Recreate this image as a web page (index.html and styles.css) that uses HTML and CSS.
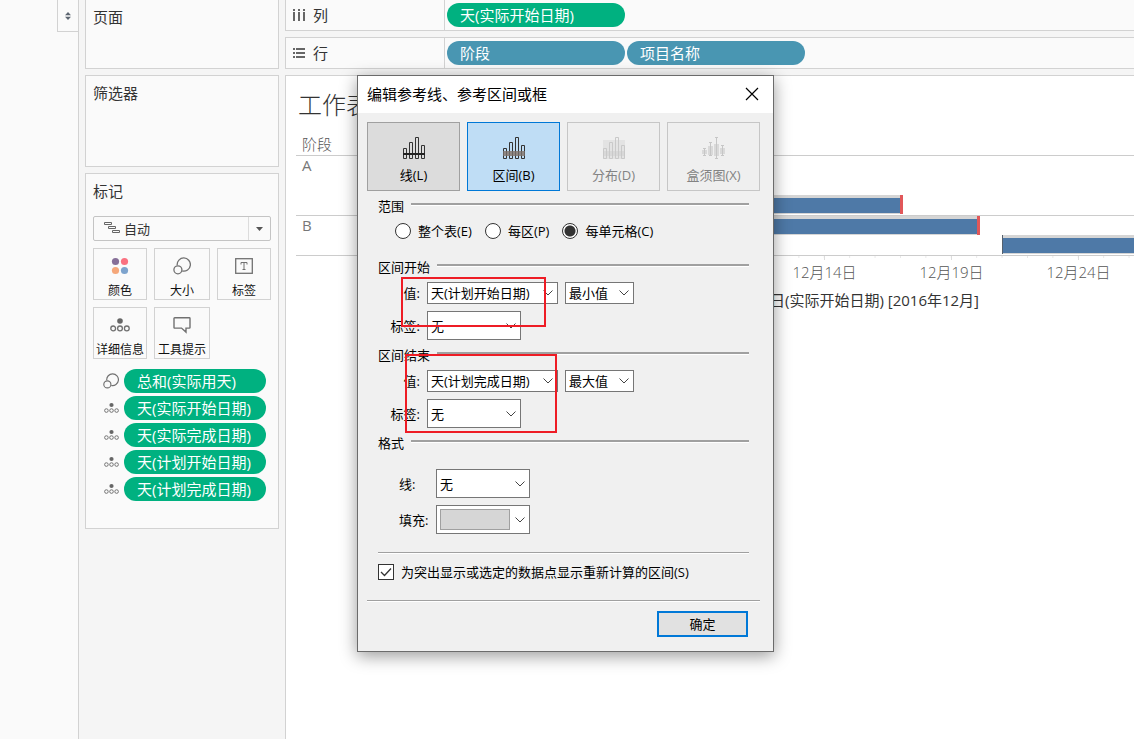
FILE: index.html
```html
<!DOCTYPE html>
<html lang="zh-CN">
<head>
<meta charset="utf-8">
<meta name="viewport" content="width=device-width, initial-scale=1">
<title>工作表</title>
<link rel="stylesheet" href="styles.css">
</head>
<body>
<svg class="defs" width="0" height="0" aria-hidden="true">
  <symbol id="i-size" viewBox="0 0 18 18"><g fill="none" stroke="#717171" stroke-width="1.3"><path d="M4.2 8.2A6.6 6.6 0 1 1 9.3 14"/><circle cx="4.9" cy="12.8" r="4"/></g></symbol>
  <symbol id="i-detail" viewBox="0 0 20 14"><circle cx="10" cy="3" r="2.8" fill="#666"/><g fill="none" stroke="#717171" stroke-width="1.3"><circle cx="3.2" cy="10.4" r="2.4"/><circle cx="10" cy="10.4" r="2.4"/><circle cx="16.8" cy="10.4" r="2.4"/></g></symbol>
  <symbol id="i-bars" viewBox="0 0 22 22"><g fill="none" stroke="currentColor"><path d="M.5 11.5h3v10h-3zM6.5 5.5h3v16h-3zM12.5.5h3v21h-3zM18.5 8.5h3v13h-3z"/></g></symbol>
</svg>

<div class="workspace">
  <aside class="data-pane">
    <button class="pane-toggle" aria-label="展开"><svg width="6" height="8" viewBox="0 0 6 8"><path d="M3 0 6 3.2H0zM0 4.8h6L3 8z" fill="#5c6570"/></svg></button>
  </aside>

  <div class="cards">
    <section class="card card-pages"><h2>页面</h2></section>
    <section class="card card-filters"><h2>筛选器</h2></section>
    <section class="card card-marks">
      <h2>标记</h2>
      <div class="mark-type">
        <svg width="16" height="16" viewBox="0 0 16 16" fill="none" stroke="#666"><path d="M.5 1.5h7v2h-7zM4.5 5.5h7v2h-7zM8.5 9.5h7v2h-7z" /></svg>
        <select aria-label="标记类型"><option>自动</option></select>
      </div>
      <div class="mark-buttons">
        <button><svg width="18" height="18" viewBox="0 0 18 18"><circle cx="4.5" cy="4.5" r="3.6" fill="#866f98"/><circle cx="13.5" cy="4.5" r="3.6" fill="#fa7180"/><circle cx="4.5" cy="13.5" r="3.6" fill="#f5a77a"/><circle cx="13.5" cy="13.5" r="3.6" fill="#7da3cd"/></svg><span>颜色</span></button>
        <button><svg width="18" height="18"><use href="#i-size"/></svg><span>大小</span></button>
        <button><svg width="18" height="18" viewBox="0 0 18 18" fill="none" stroke="#717171"><rect x=".7" y="1.7" width="16.6" height="14.6" stroke-width="1.3"/><path d="M6 7.5v-2h6v2M9 5.5v7M7.5 12.5h3"/></svg><span>标签</span></button>
        <button><svg width="20" height="14"><use href="#i-detail"/></svg><span>详细信息</span></button>
        <button><svg width="18" height="18" viewBox="0 0 18 18" fill="none" stroke="#717171" stroke-width="1.4"><path d="M1.7 1.7h14.6q.7 0 .7.7v9q0 .7-.7.7H13v4L8.5 12.1H1.7Q1 12.1 1 11.4v-9q0-.7.7-.7z"/></svg><span>工具提示</span></button>
      </div>
      <ul class="mark-pills">
        <li><svg width="16" height="16"><use href="#i-size"/></svg><span class="pill green">总和(实际用天)</span></li>
        <li><svg width="15" height="12"><use href="#i-detail"/></svg><span class="pill green">天(实际开始日期)</span></li>
        <li><svg width="15" height="12"><use href="#i-detail"/></svg><span class="pill green">天(实际完成日期)</span></li>
        <li><svg width="15" height="12"><use href="#i-detail"/></svg><span class="pill green">天(计划开始日期)</span></li>
        <li><svg width="15" height="12"><use href="#i-detail"/></svg><span class="pill green">天(计划完成日期)</span></li>
      </ul>
    </section>
  </div>

  <main class="sheet">
    <div class="shelf shelf-columns">
      <div class="shelf-name"><svg width="12" height="12" viewBox="0 0 12 12" fill="#666"><path d="M0 0h2v2H0zM5 0h2v2H5zM10 0h2v2h-2zM0 3h2v9H0zM5 3h2v9H5zM10 3h2v9h-2z"/></svg>列</div>
      <div class="shelf-pills"><span class="pill green">天(实际开始日期)</span></div>
    </div>
    <div class="shelf">
      <div class="shelf-name"><svg width="12" height="12" viewBox="0 0 12 12" fill="#666"><path d="M0 1h2v2H0zM0 5h2v2H0zM0 9h2v2H0zM3 1h9v2H3zM3 5h9v2H3zM3 9h9v2H3z"/></svg>行</div>
      <div class="shelf-pills"><span class="pill blue">阶段</span><span class="pill blue">项目名称</span></div>
    </div>
    <div class="view">
      <h1>工作表</h1>
      <div class="field-name">阶段</div>
      <div class="phase">
        <div class="phase-name">A</div>
        <div class="lanes">
          <div class="lane"></div>
          <div class="lane"></div>
          <div class="lane"><div class="bar late" style="width:458px"></div></div>
        </div>
      </div>
      <div class="phase">
        <div class="phase-name">B</div>
        <div class="lanes">
          <div class="lane"><div class="bar late" style="width:535px"></div></div>
          <div class="lane"><div class="bar start" style="margin-left:557px;width:180px"></div></div>
        </div>
      </div>
      <div class="axis"><span>12月4日</span><span>12月9日</span><span>12月14日</span><span>12月19日</span><span>12月24日</span></div>
      <div class="axis-title">日(实际开始日期) [2016年12月]</div>
    </div>
  </main>
</div>

<div class="dialog" role="dialog" aria-labelledby="dlg-title">
  <header class="dialog-head">
    <h2 id="dlg-title">编辑参考线、参考区间或框</h2>
    <button class="close" aria-label="关闭"><svg width="14" height="14" viewBox="0 0 14 14"><path d="M1 1l12 12M13 1 1 13" stroke="#000" stroke-width="1.2"/></svg></button>
  </header>
  <form class="dialog-body">
    <div class="kinds">
      <button type="button" class="kind"><svg width="22" height="22"><use href="#i-bars"/><path d="M0 17h22" stroke="#222" stroke-width="2"/></svg>线(L)</button>
      <button type="button" class="kind active"><svg width="22" height="22"><path d="M0 14h22v5H0z" fill="#8f8783"/><use href="#i-bars"/><path d="M0 14h22v5H0z" fill="#8f8783" opacity=".6"/></svg>区间(B)</button>
      <button type="button" class="kind" disabled><svg width="22" height="22"><path d="M0 3h22v11H0z" fill="#e3e3e3"/><path d="M0 14h22v5H0z" fill="#d8d8d8"/><path d="M0 19h22v3H0z" fill="#e3e3e3"/><use href="#i-bars"/></svg>分布(D)</button>
      <button type="button" class="kind" disabled><svg width="24" height="22" viewBox="0 0 24 22"><path d="M0 13h5v4H0zM6 9h5v9H6zM12 7h5v12h-5zM18 11h5v6h-5z" fill="#d9d9d9"/><path d="M2.500 11v8M8.500 5.500v13M14.500.5v21M20.500 8.500v10M1 11.500h3M7 5.500h3M13 .5h3M19 8.500h3M1 18.500h3M7 18.500h3M13 21.500h3M19 18.500h3" fill="none" stroke="#c6c6c6"/></svg>盒须图(X)</button>
    </div>

    <div class="section">
      <div class="legend">范围</div>
      <div class="scope">
        <label><input type="radio" name="scope">整个表(E)</label>
        <label><input type="radio" name="scope">每区(P)</label>
        <label><input type="radio" name="scope" checked>每单元格(C)</label>
      </div>
    </div>

    <div class="section">
      <div class="legend">区间开始</div>
      <div class="fields">
        <label for="v1">值:</label>
        <div class="pair"><select id="v1" class="combo wide"><option>天(计划开始日期)</option></select><select class="combo agg" aria-label="聚合"><option>最小值</option></select></div>
        <label for="l1">标签:</label>
        <select id="l1" class="combo tall"><option>无</option></select>
      </div>
    </div>

    <div class="section">
      <div class="legend">区间结束</div>
      <div class="fields">
        <label for="v2">值:</label>
        <div class="pair"><select id="v2" class="combo wide"><option>天(计划完成日期)</option></select><select class="combo agg" aria-label="聚合"><option>最大值</option></select></div>
        <label for="l2">标签:</label>
        <select id="l2" class="combo tall"><option>无</option></select>
      </div>
    </div>

    <div class="section">
      <div class="legend">格式</div>
      <div class="fields format">
        <label for="line">线:</label>
        <select id="line" class="combo tall"><option>无</option></select>
        <label for="fill">填充:</label>
        <button type="button" id="fill" class="combo tall fill"><span class="swatch"></span></button>
      </div>
    </div>

    <label class="recalc"><input type="checkbox" checked>为突出显示或选定的数据点显示重新计算的区间(S)</label>
    <footer class="dialog-foot"><button type="button" class="ok">确定</button></footer>
  </form>
  <div class="mark-box first"></div>
  <div class="mark-box second"></div>
</div>
</body>
</html>
```
FILE: styles.css
```css
* { box-sizing: border-box; }
body {
  margin: 0;
  height: 100vh;
  overflow: hidden;
  background: #f5f5f5;
  color: #333;
  font: 15px/20px "Open Sans", "Noto Sans CJK SC", sans-serif;
}
h1, h2, ul { margin: 0; padding: 0; font-weight: 400; }
h2 { font-size: 15px; }
button, select, input { font: inherit; color: inherit; margin: 0; }
button { padding: 0; background: none; border: 0; }
svg { display: block; flex: none; }
.defs { position: absolute; }

.workspace { display: flex; height: 100%; }
.data-pane {
  flex: none;
  width: 79px;
  background: #fafafa;
  border-right: 1px solid #d2d2d2;
  display: flex;
  justify-content: flex-end;
  align-items: flex-start;
}
.pane-toggle {
  width: 21px;
  height: 32px;
  border: solid #d2d2d2;
  border-width: 0 0 1px 1px;
  display: flex;
  justify-content: center;
  align-items: center;
}

.cards {
  flex: none;
  width: 206px;
  padding: 0 6px;
  display: flex;
  flex-direction: column;
  gap: 6px;
}
.card { background: #fafafa; border: 1px solid #d2d2d2; padding: 7px; }
.card-pages { height: 69px; border-top: 0; }
.card-filters { height: 92px; }
.card-marks { min-height: 356px; }

.mark-type {
  display: flex;
  align-items: center;
  height: 25px;
  margin-top: 15px;
  padding-left: 10px;
  border: 1px solid #c4c4c4;
  border-radius: 2px;
}
.mark-type select {
  flex: 1;
  align-self: stretch;
  appearance: none;
  border: 0;
  padding: 0 4px;
  font-size: 13px;
  background: linear-gradient(#dcdcdc, #dcdcdc) right 21px top / 1px 100% no-repeat,
    url("data:image/svg+xml,%3Csvg xmlns='http://www.w3.org/2000/svg' width='7' height='4'%3E%3Cpath d='M0 0h7L3.500 4z' fill='%23555'/%3E%3C/svg%3E") right 7px center no-repeat;
}
.mark-buttons {
  display: grid;
  grid-template-columns: 54fr 56fr 54fr;
  gap: 7px;
  margin-top: 7px;
}
.mark-buttons button {
  height: 52px;
  border: 1px solid #d2d2d2;
  display: grid;
  grid-template-rows: 34px 16px;
  place-items: center;
  font-size: 12px;
  line-height: 16px;
  color: #111;
  white-space: nowrap;
}
.mark-pills {
  list-style: none;
  display: flex;
  flex-direction: column;
  gap: 3px;
  margin-top: 10px;
  padding: 0 5px 0 10px;
}
.mark-pills li { display: grid; grid-template-columns: 16px 1fr; gap: 5px; align-items: center; justify-items: center; }
.mark-pills .pill { width: 100%; }

.pill {
  height: 24px;
  padding: 0 13px;
  border-radius: 12px;
  color: #fff;
  line-height: 24px;
  white-space: nowrap;
}
.green { background: #00b180; }
.blue { background: #4996b2; }

.sheet { flex: 1; min-width: 0; display: flex; flex-direction: column; gap: 6px; }
.shelf {
  flex: none;
  height: 32px;
  display: flex;
  background: #fafafa;
  border: solid #d2d2d2;
  border-width: 1px 0 1px 1px;
}
.shelf-columns { height: 31px; border-top: 0; }
.shelf-name {
  width: 159px;
  padding-left: 7px;
  display: flex;
  align-items: center;
  gap: 8px;
  border-right: 1px solid #d2d2d2;
}
.shelf-pills { display: flex; align-items: center; gap: 2px; padding-left: 2px; }
.shelf-pills .pill { width: 178px; }

.view {
  flex: 1;
  overflow: hidden;
  background: #fff;
  border: solid #d2d2d2;
  border-width: 1px 0 0 1px;
  padding: 12px 0 0 10px;
}
.view h1 {
  font-size: 24px;
  line-height: 34px;
  font-weight: 300;
  padding-left: 2px;
}
.field-name { padding: 12px 0 1px 6px; color: #555; font-weight: 300; }
.phase { display: flex; height: 60px; border-top: 1px solid #ccc; }
.phase + .phase { height: 40px; }
.phase-name { width: 149px; padding-left: 6px; color: #777; line-height: 18px; }
.lanes {
  flex: 1;
  min-width: 0;
  overflow: hidden;
  display: flex;
  flex-direction: column;
  justify-content: flex-end;
}
.lane { flex: none; height: 20px; }
.lane:first-child { height: 19px; }
.bar {
  height: 19px;
  border: solid #d5d5d5;
  border-width: 3px 0 1px;
  background: #4e79a7;
  display: flex;
  justify-content: flex-end;
}
.bar.late::after { content: ""; width: 3px; height: 19px; margin-top: -3px; background: #e15759; }
.bar.start { justify-content: flex-start; }
.bar.start::before { content: ""; width: 1px; height: 19px; margin-top: -3px; background: #55616e; }
.axis {
  border-top: 1px solid #ccc;
  display: flex;
  padding-left: 211px;
  color: #555;
  font-weight: 300;
}
.axis span {
  flex: none;
  width: 127px;
  padding-top: 6px;
  text-align: center;
  background: linear-gradient(#ddd, #ddd) center top / 1px 4px no-repeat,
    linear-gradient(to right, #e8e8e8 1px, transparent 1px) 12px 0 / 20% 2px repeat-x;
}
.axis-title { padding: 8px 0 0 474px; white-space: nowrap; }

.dialog {
  position: absolute;
  left: 357px;
  top: 75px;
  width: 417px;
  background: #f0f0f0;
  border: 1px solid #6b6b6b;
  box-shadow: 0 4px 16px rgba(0, 0, 0, .4);
  color: #000;
  font-size: 13px;
}
.dialog-head {
  height: 37px;
  padding: 0 14px 2px 9px;
  background: #fff;
  display: flex;
  align-items: center;
  justify-content: space-between;
}
.dialog-body { padding: 9px 13px 14px 9px; }
.kinds { display: grid; grid-template-columns: repeat(4, 1fr); gap: 7px; }
.kind {
  height: 69px;
  padding-top: 8px;
  display: flex;
  flex-direction: column;
  align-items: center;
  justify-content: center;
  gap: 6px;
  background: #dcdcdc;
  border: 1px solid #a0a0a0;
}
.kind svg { color: #333; }
.kind.active { background: #bfddf5; border-color: #0078d7; }
.kind:disabled { background: #efefef; border-color: #c6c6c6; color: #838383; }
.kind:disabled svg { color: #c9c9c9; }

.section { margin-top: 5px; padding: 0 11px; }
.legend { display: flex; align-items: center; gap: 7px; }
.legend::after {
  content: "";
  flex: 1;
  height: 2px;
  margin-bottom: 4px;
  background: #a0a0a0;
  border-bottom: 1px solid #fff;
}
.scope { display: flex; align-items: center; gap: 13px; height: 30px; padding: 0 0 0 17px; margin-bottom: 11px; }
.scope label { display: flex; align-items: center; gap: 7px; white-space: nowrap; }
input[type="radio"] {
  appearance: none;
  flex: none;
  width: 16px;
  height: 16px;
  border: 1px solid #333;
  border-radius: 50%;
  background: #fff;
}
input[type="radio"]:checked { background: radial-gradient(circle, #333 5px, #fff 6px); }
.fields {
  display: grid;
  grid-template-columns: 42px auto;
  justify-content: start;
  align-items: center;
  gap: 7px;
  padding-top: 5px;
}
.fields label { text-align: right; white-space: nowrap; }
.format { grid-template-columns: 30px auto; padding: 16px 0 0 21px; }
.format label { text-align: left; }
.pair { display: flex; gap: 7px; }
.combo {
  appearance: none;
  height: 22px;
  padding: 0 3px;
  border: 1px solid #767676;
  border-radius: 0;
  line-height: 20px;
  background: #fff url("data:image/svg+xml,%3Csvg xmlns='http://www.w3.org/2000/svg' width='10' height='6'%3E%3Cpath d='M.5.5 5 5 9.500.5' fill='none' stroke='%23444'/%3E%3C/svg%3E") right 4px center no-repeat;
}
.wide { width: 131px; }
.agg { width: 69px; }
.tall { width: 94px; height: 29px; }
.fill { display: flex; align-items: center; }
.swatch { width: 70px; height: 21px; background: #d6d6d6; border: 1px solid #a0a0a0; }

.recalc {
  display: flex;
  align-items: center;
  gap: 7px;
  margin: 18px 11px 0;
  padding: 9px 0 18px;
  border-top: 1px solid #a0a0a0;
  box-shadow: inset 0 1px #fff;
  white-space: nowrap;
}
input[type="checkbox"] {
  appearance: none;
  flex: none;
  width: 16px;
  height: 16px;
  border: 1px solid #333;
  background: #fff;
}
input[type="checkbox"]:checked {
  background: #fff url("data:image/svg+xml,%3Csvg xmlns='http://www.w3.org/2000/svg' width='14' height='14'%3E%3Cpath d='M2 7l3.500 3.500L12 3.500' fill='none' stroke='%23333' stroke-width='1.300'/%3E%3C/svg%3E") center no-repeat;
}
.dialog-foot {
  display: flex;
  justify-content: flex-end;
  border-top: 1px solid #a0a0a0;
  box-shadow: inset 0 1px #fff;
  padding: 10px 12px 0;
}
.ok { width: 91px; height: 26px; background: #e1e1e1; border: 2px solid #0078d7; }

.mark-box { position: absolute; border: 2px solid #ee1c25; pointer-events: none; }
.first { left: 43px; top: 201px; width: 145px; height: 50px; }
.second { left: 47px; top: 278px; width: 152px; height: 79px; }
```
